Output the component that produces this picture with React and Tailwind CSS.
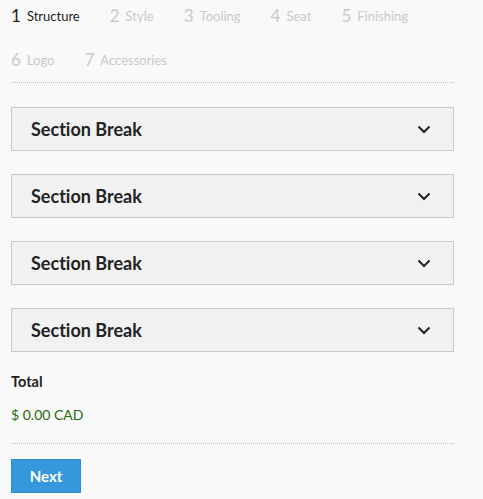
const steps = [
  { n: 1, label: 'Structure', active: true },
  { n: 2, label: 'Style' },
  { n: 3, label: 'Tooling' },
  { n: 4, label: 'Seat' },
  { n: 5, label: 'Finishing' },
  { n: 6, label: 'Logo' },
  { n: 7, label: 'Accessories' }
];

function Chevron() {
  return (
    <svg width="14" height="9" viewBox="0 0 14 9" fill="none">
      <polyline points="1.5,1.5 7,7 12.5,1.5" stroke="#222" strokeWidth="2" />
    </svg>
  );
}

export default function App() {
  return (
    <div className="min-h-[499px] bg-[#f9f9f9] px-[11px] font-['Lato',sans-serif] text-[#222] [font-variant-ligatures:none]">
      <div className="w-[443px]">
        <div className="flex flex-wrap gap-y-[14px]">
          {steps.map((s) => (
            <div
              key={s.n}
              className={`mr-[30px] flex h-[30px] items-center gap-[6px] ${
                s.active ? 'text-[#222]' : 'text-[#c9c9c9]'
              }`}
            >
              <span className="text-[17px] leading-none">{s.n}</span>
              <span className="pt-[2px] text-[13px] leading-none">{s.label}</span>
            </div>
          ))}
        </div>
        <div className="mt-[8px] border-t border-dotted border-[#bdbdbd]" />

        <div className="mt-[24px]">
          {[0, 1, 2, 3].map((i) => (
            <div
              key={i}
              className="mb-[23px] flex h-[44px] items-center justify-between border border-[#c9c9c9] bg-[#f1f1f1] pl-[19px] pr-[22px]"
            >
              <span className="text-[18px] font-bold">Section Break</span>
              <Chevron />
            </div>
          ))}
        </div>

        <div className="-mt-[3px] text-[14.5px] font-bold leading-[20px]">Total</div>
        <div className="mt-[13px] text-[14px] leading-[20px] text-[#1b6b0c]">$ 0.00 CAD</div>
        <div className="mt-[18px] border-t border-dotted border-[#bdbdbd]" />
        <button className="mt-[15px] h-[34px] w-[70px] border border-[#2b8fd2] bg-[#3498db] text-[15px] font-bold text-white">
          Next
        </button>
      </div>
    </div>
  );
}
